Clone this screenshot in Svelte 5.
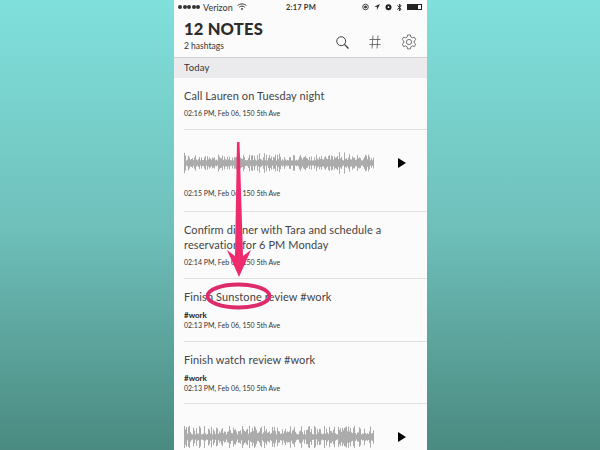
<script>
  // fixed pseudo random so the waveforms stay the same each render
  function makeWave(seed, count, spread) {
    let bars = [];
    let v = seed;
    for (let i = 0; i < count; i++) {
      v = (v * 9301 + 49297) % 233280;
      let r = v / 233280;
      bars.push(5 + r * r * spread + (i % 5 == 0 ? 6 : 0));
    }
    return bars;
  }

  const wave1 = makeWave(17, 190, 12);
  const wave2 = makeWave(91, 190, 17);

  const notes = [
    { type: "text", lines: "Call Lauren on Tuesday night", meta: "02:16 PM, Feb 06, 150 5th Ave", h: 52 },
    { type: "audio", wave: wave1, meta: "02:15 PM, Feb 06, 150 5th Ave", h: 82 },
    { type: "text", lines: "Confirm dinner with Tara and schedule a reservation for 6 PM Monday", meta: "02:14 PM, Feb 06, 150 5th Ave", h: 67 },
    { type: "text", lines: "Finish Sunstone review #work", tag: "#work", meta: "02:13 PM, Feb 06, 150 5th Ave", h: 63 },
    { type: "text", lines: "Finish watch review #work", tag: "#work", meta: "02:13 PM, Feb 06, 150 5th Ave", h: 62 },
    { type: "audio", wave: wave2, meta: "", h: 60 },
  ];
</script>

<div class="stage">
  <div class="phone">
    <div class="status">
      <div class="status-left">
        <span class="dots"><i></i><i></i><i></i><i></i><i></i></span>
        <span class="carrier">Verizon</span>
        <svg width="10" height="8" viewBox="0 0 10 8" fill="none" stroke="#333" stroke-width="1">
          <path d="M.6 2.6C3 .4 7 .4 9.4 2.6" />
          <path d="M2.2 4.2C3.8 2.8 6.2 2.8 7.8 4.2" />
          <path d="M3.8 5.8C4.5 5.2 5.5 5.2 6.2 5.8L5 7.2Z" fill="#333" stroke="none" />
        </svg>
      </div>
      <div class="clock">2:17 PM</div>
      <div class="status-right">
        <svg width="7" height="8" viewBox="0 0 8 8" fill="none" stroke="#333" stroke-width="1"><circle cx="4" cy="4" r="3.2" /><circle cx="4" cy="4" r="1.2" fill="#333" /></svg>
        <svg width="6" height="6" viewBox="0 0 7 7" fill="#222"><path d="M7 0 0 3.2h3.400V7Z" /></svg>
        <svg width="7" height="8" viewBox="0 0 8 8" fill="#222"><circle cx="4" cy="4.200" r="3.400" /><circle cx="4" cy="4.200" r="1" fill="#fff" /></svg>
        <svg width="5" height="9" viewBox="0 0 5 9" fill="none" stroke="#222" stroke-width=".9"><path d="M.3 2.400 4.200 6 2.400 8V1L4.200 3 .3 6.600" /></svg>
        <div class="battery"><b></b></div>
      </div>
    </div>

    <header>
      <div>
        <h1>12 NOTES</h1>
        <div class="sub">2 hashtags</div>
      </div>
      <div class="tools">
        <svg width="13" height="13" viewBox="0 0 14 14" fill="none" stroke="#333" stroke-width="1"><circle cx="5.600" cy="5.600" r="4.800" /><path d="M9 9l4.500 4.500" stroke-width="1.300" /></svg>
        <svg width="12" height="14" viewBox="0 0 12 14" fill="none" stroke="#555" stroke-width=".8"><path d="M4 .5 3 13.500M9 .5 8 13.500M.5 4.500h11M.5 9.500h11" /></svg>
        <svg width="16" height="16" viewBox="0 0 16 16" fill="none" stroke="#555" stroke-width=".8"><path d="M6.600 1h2.800l.4 2 1.600.9 2-.7 1.400 2.400-1.600 1.400v1.900l1.600 1.300-1.400 2.400-2-.7-1.600 1-.4 2H6.600l-.4-2-1.600-1-2 .7-1.400-2.400L2.800 8.900V7L1.200 5.600l1.400-2.400 2 .7 1.600-.9Z" /><circle cx="8" cy="8" r="2.600" /></svg>
      </div>
    </header>

    <div class="section">Today</div>

    {#each notes as note}
      <div class="note" style="height: {note.h}px">
        {#if note.type == "audio"}
          <div class="audio">
            <svg class="wave" width="190" height="22" viewBox="0 0 190 22">
              {#each note.wave as h, i}
                <rect x={i} y={11 - h / 2} width="1" height={h} fill="#ababab" />
              {/each}
            </svg>
            <svg class="play" width="8" height="10" viewBox="0 0 8 10"><path d="M0 0 8 5 0 10Z" fill="#000" /></svg>
          </div>
        {:else}
          <div class="title">{note.lines}</div>
          {#if note.tag}<div class="tag">{note.tag}</div>{/if}
        {/if}
        {#if note.meta}<div class="meta">{note.meta}</div>{/if}
      </div>
    {/each}
  </div>

  <!-- hand drawn markup on top of the screenshot -->
  <svg class="markup" width="600" height="450" viewBox="0 0 600 450" fill="none">
    <path d="M237 142 239.500 142 243 256 251 250 239 277 227 250 235 256Z" fill="#f02a6e" />
    <ellipse cx="238.500" cy="296" rx="31" ry="11.500" stroke="#dd2b6c" stroke-width="3.800" />
  </svg>
</div>

<style>
  :global(body) {
    margin: 0;
  }

  .stage {
    position: relative;
    width: 600px;
    height: 450px;
    overflow: hidden;
    background: linear-gradient(#80e0dc 0%, #6fc0bb 50%, #4a8a80 100%);
    font-family: Lato, "Liberation Sans", sans-serif;
    color: #333;
  }

  .phone {
    width: 253px;
    height: 450px;
    margin-left: 174px;
    background: #fbfbfb;
    overflow: hidden;
  }

  .status {
    height: 14px;
    padding: 0 5px 0 4px;
    display: flex;
    align-items: center;
    justify-content: space-between;
    font-size: 7.500px;
    color: #333;
    position: relative;
  }

  .status-left {
    display: flex;
    align-items: center;
    gap: 3px;
  }

  .carrier {
    font-size: 9px;
    margin-right: 1px;
  }

  .dots {
    display: flex;
    gap: 0.5px;
  }

  .dots i {
    width: 4px;
    height: 4px;
    border-radius: 50%;
    background: #333;
  }

  .clock {
    position: absolute;
    left: 112px;
    font-weight: 700;
    font-size: 7.500px;
    letter-spacing: 0.2px;
  }

  .status-right {
    display: flex;
    align-items: center;
    gap: 5px;
  }

  .battery {
    width: 15px;
    height: 6px;
    border: 0.5px solid #222;
    box-sizing: border-box;
  }

  .battery b {
    display: block;
    width: 10px;
    height: 100%;
    background: #222;
  }

  header {
    height: 44px;
    box-sizing: border-box;
    padding: 6px 10px 0 10px;
    display: flex;
    justify-content: space-between;
    border-bottom: 1px solid #cfcfd0;
  }

  h1 {
    margin: 0;
    font-size: 16.500px;
    line-height: 18px;
    font-weight: 900;
    color: #2c2c2c;
    letter-spacing: 0.2px;
  }

  .sub {
    font-size: 8.500px;
    line-height: 12px;
    margin-top: 2px;
  }

  .tools {
    display: flex;
    align-items: center;
    gap: 20px;
    padding-top: 12px;
    padding-bottom: 5px;
  }

  .section {
    height: 20px;
    line-height: 20px;
    padding-left: 10px;
    background: #ebebed;
    font-size: 9.500px;
    letter-spacing: 0.2px;
  }

  .note {
    box-sizing: border-box;
    margin-left: 10px;
    padding-top: 9.500px;
    border-bottom: 1px solid #dfdfe0;
  }

  .note:last-child {
    border-bottom: none;
  }

  .title {
    font-size: 11px;
    font-weight: 400;
    line-height: 15px;
    letter-spacing: 0.1px;
    width: 225px;
    color: #444;
  }

  .tag {
    font-size: 8px;
    line-height: 10px;
    margin-top: 6.500px;
    font-weight: 700;
    color: #222;
  }

  .title + .meta {
    margin-top: 5.500px;
  }

  .meta {
    font-size: 7px;
    line-height: 10px;
    color: #333;
  }

  .audio {
    display: flex;
    align-items: center;
    height: 22px;
    padding-top: 12px;
    margin-bottom: 14.500px;
  }

  .play {
    margin-left: 24px;
  }

  .markup {
    position: absolute;
    left: 0;
    top: 0;
  }
</style>
